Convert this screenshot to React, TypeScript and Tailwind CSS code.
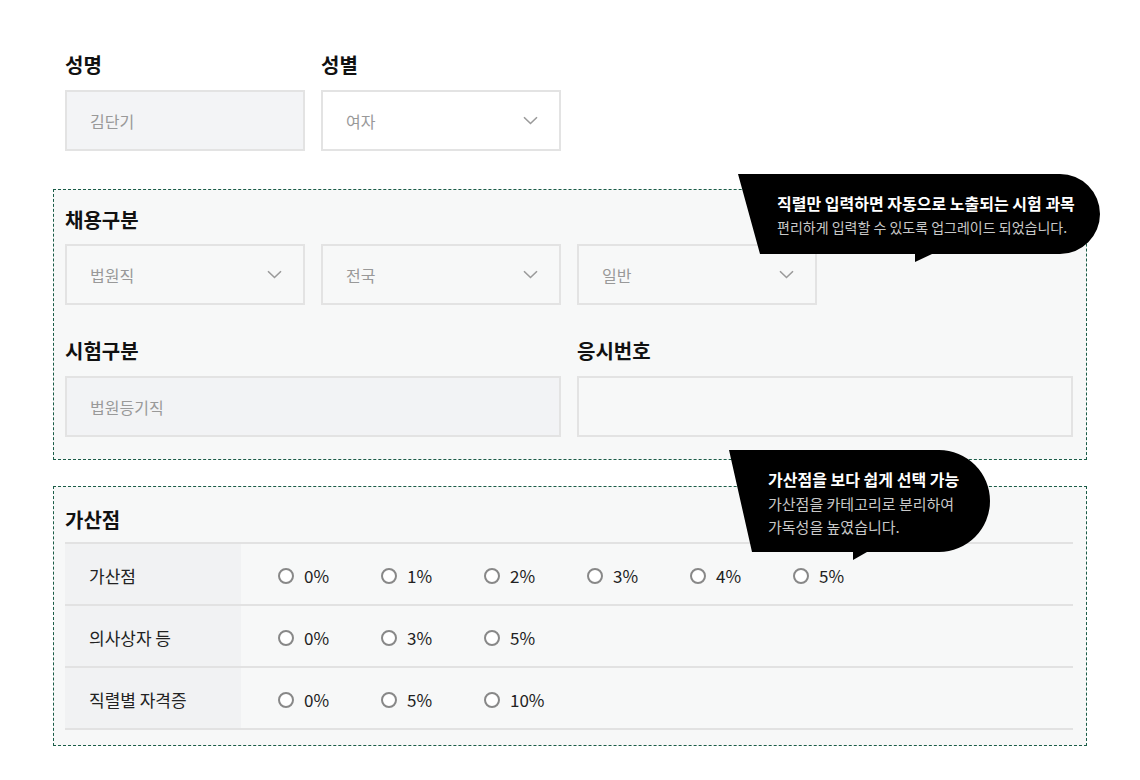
import React from "react";

const Chevron = () => (
  <svg width="15" height="9" viewBox="0 0 15 9" className="shrink-0">
    <path d="M1 1.2l6.5 6.3 6.5-6.3" fill="none" stroke="#9a9a9a" strokeWidth="1.6" />
  </svg>
);

function Label({ children, mb = "mb-[12px]" }: { children: React.ReactNode; mb?: string }) {
  return <div className={`h-[26px] leading-[26px] text-[20px] font-bold text-[#111] ${mb}`}>{children}</div>;
}

function Field({
  value,
  select,
  bg = "bg-transparent",
}: {
  value?: string;
  select?: boolean;
  bg?: string;
}) {
  return (
    <div
      className={`h-[61px] border-2 border-[#e3e3e3] flex items-center justify-between pl-[23px] pr-[21px] text-[16px] text-[#999] ${bg}`}
    >
      <span>{value}</span>
      {select && <Chevron />}
    </div>
  );
}

function Radio({ label }: { label: string }) {
  return (
    <label className="w-[103px] flex items-center gap-[10px] text-[17px] text-[#222]">
      <span className="w-[16px] h-[16px] rounded-full border-2 border-[#888] bg-white shrink-0" />
      {label}
    </label>
  );
}

const bonusRows = [
  { name: "가산점", options: ["0%", "1%", "2%", "3%", "4%", "5%"] },
  { name: "의사상자 등", options: ["0%", "3%", "5%"] },
  { name: "직렬별 자격증", options: ["0%", "5%", "10%"] },
];

export default function App() {
  return (
    <div className="relative w-[1140px] h-[780px] bg-white font-['Noto_Sans_CJK_KR',sans-serif] overflow-hidden">
      <div className="pt-[52px] pl-[53px]">
        {/* 이름 / 성별 */}
        <div className="pl-[12px] grid grid-cols-[240px_240px] gap-x-[16px]">
          <div>
            <Label>성명</Label>
            <Field value="김단기" bg="bg-[#f3f4f6]" />
          </div>
          <div>
            <Label>성별</Label>
            <Field value="여자" select bg="bg-white" />
          </div>
        </div>

        {/* 채용구분 / 시험구분 */}
        <div className="mt-[38px] w-[1034px] border border-dashed border-[#1a5c47] bg-[#f7f8f8] pt-[17px] pb-[22px] pl-[11px]">
          <Label mb="mb-[11px]">채용구분</Label>
          <div className="grid grid-cols-[240px_240px_240px_240px] gap-x-[16px]">
            <Field value="법원직" select />
            <Field value="전국" select />
            <Field value="일반" select />
          </div>
          <div className="mt-[33px] grid grid-cols-[496px_496px] gap-x-[16px]">
            <div>
              <Label>시험구분</Label>
              <Field value="법원등기직" bg="bg-[#f2f3f5]" />
            </div>
            <div>
              <Label>응시번호</Label>
              <Field />
            </div>
          </div>
        </div>

        {/* 가산점 */}
        <div className="mt-[26px] w-[1034px] border border-dashed border-[#1a5c47] bg-[#f7f8f8] pt-[20px] pb-[15px] pl-[11px]">
          <Label mb="mb-[9px]">가산점</Label>
          <div className="w-[1008px] border-t-2 border-[#e2e2e2]">
            {bonusRows.map((row) => (
              <div key={row.name} className="flex h-[62px] border-b-2 border-[#e2e2e2]">
                <div className="w-[176px] bg-[#f1f2f3] flex items-center pl-[24px] pt-[4px] text-[17px] text-[#222]">
                  {row.name}
                </div>
                <div className="flex items-center pl-[37px] pt-[4px]">
                  {row.options.map((o) => (
                    <Radio key={o} label={o} />
                  ))}
                </div>
              </div>
            ))}
          </div>
        </div>
      </div>

      {/* 말풍선 1 */}
      <div className="absolute left-[738px] top-[174px] w-[362px] h-[88px]">
        <svg width="362" height="88" viewBox="0 0 362 88" className="absolute inset-0">
          <path d="M0 0H322A40 40 0 0 1 322 80H194L177 88V80H22Z" fill="#000" />
        </svg>
        <div className="relative pl-[39px] pt-[17px]">
          <div className="text-[16px] leading-[24px] font-bold text-white whitespace-nowrap">
            직렬만 입력하면 자동으로 노출되는 시험 과목
          </div>
          <div className="text-[14px] leading-[25px] text-[#c8c8c8] whitespace-nowrap">
            편리하게 입력할 수 있도록 업그레이드 되었습니다.
          </div>
        </div>
      </div>

      {/* 말풍선 2 */}
      <div className="absolute left-[729px] top-[450px] w-[261px] h-[110px]">
        <svg width="261" height="110" viewBox="0 0 261 110" className="absolute inset-0">
          <path d="M0 0H210A51 51 0 0 1 210 102H138L124 110V102H23Z" fill="#000" />
        </svg>
        <div className="relative pl-[39px] pt-[16px]">
          <div className="text-[16px] leading-[26px] font-bold text-white whitespace-nowrap">
            가산점을 보다 쉽게 선택 가능
          </div>
          <div className="text-[15px] leading-[23px] text-[#c8c8c8] whitespace-nowrap">
            가산점을 카테고리로 분리하여
            <br />
            가독성을 높였습니다.
          </div>
        </div>
      </div>
    </div>
  );
}
